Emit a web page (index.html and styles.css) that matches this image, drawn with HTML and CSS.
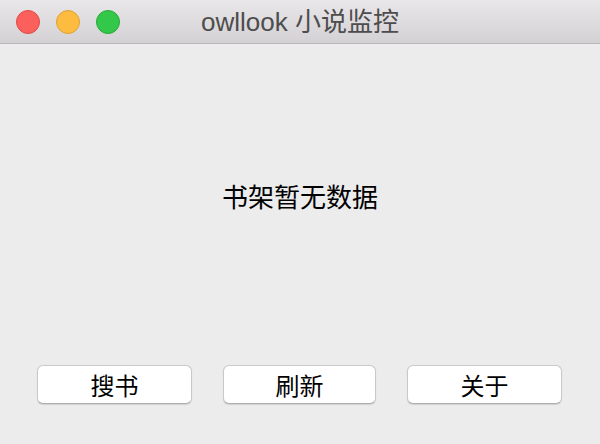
FILE: index.html
```html
<!DOCTYPE html>
<html lang="zh">
<head>
<meta charset="utf-8">
<title>owllook 小说监控</title>
<link rel="stylesheet" href="styles.css">
</head>
<body>
<div class="window">
  <header class="titlebar">
    <div class="lights">
      <span class="light red"></span>
      <span class="light yellow"></span>
      <span class="light green"></span>
    </div>
    <div class="title">owllook 小说监控</div>
  </header>
  <main class="content">
    <p class="message">书架暂无数据</p>
    <div class="actions">
      <button class="btn">搜书</button>
      <button class="btn">刷新</button>
      <button class="btn">关于</button>
    </div>
  </main>
</div>
</body>
</html>
```

FILE: styles.css
```css
html, body {
  margin: 0;
  padding: 0;
  background: #ececec;
}
.window {
  width: 600px;
  height: 444px;
  display: flex;
  flex-direction: column;
  background: #ececec;
  font-family: "Liberation Sans", "Noto Sans CJK SC", sans-serif;
  overflow: hidden;
}
.titlebar {
  position: relative;
  height: 43px;
  flex: none;
  background: linear-gradient(#e9e7e9, #d3d1d3);
  border-bottom: 1px solid #b9b9b9;
  display: flex;
  align-items: center;
  justify-content: center;
}
.lights {
  position: absolute;
  left: 16px;
  top: 10px;
  display: flex;
  gap: 16px;
}
.light {
  width: 22px;
  height: 22px;
  border-radius: 50%;
  display: block;
}
.red { background: #fc605c; border: 1px solid #de4a46; }
.yellow { background: #fdbc40; border: 1px solid #dea235; }
.green { background: #34c84a; border: 1px solid #27aa35; }
.title {
  font-size: 26px;
  color: #4d4d4d;
  line-height: 43px;
  padding-top: 1px;
}
.content {
  flex: 1;
  display: flex;
  flex-direction: column;
  padding-top: 137px;
}
.message {
  margin: 0;
  text-align: center;
  font-family: "Noto Sans CJK SC", sans-serif;
  font-size: 26px;
  line-height: 30px;
  color: #000;
}
.actions {
  margin-top: auto;
  margin-bottom: 40px;
  padding: 0 38px 0 37px;
  display: flex;
  justify-content: space-between;
}
.btn {
  width: 155px;
  height: 39px;
  background: #fff;
  border: 1px solid #c9c9c9;
  border-bottom-color: #aeaeae;
  border-radius: 6px;
  box-shadow: 0 1px 1px rgba(0,0,0,0.12);
  font-family: "Noto Sans CJK SC", sans-serif;
  font-size: 24px;
  color: #000;
  padding: 0;
  line-height: 37px;
}
.btn:nth-child(2) {
  width: 153px;
}
```
